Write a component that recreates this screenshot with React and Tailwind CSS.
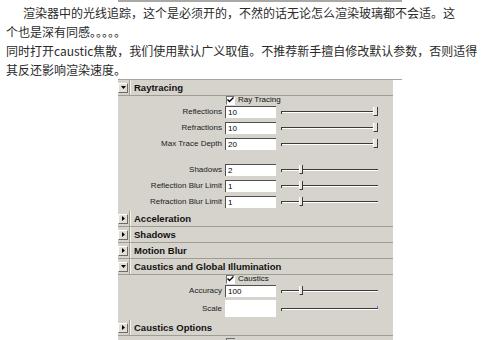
import React from "react";

const cjk = { fontFamily: '"Noto Sans CJK SC", "Liberation Sans", sans-serif' };
const ui = { fontFamily: '"Liberation Sans", Arial, sans-serif' };

function Arrow({ open }) {
  return open ? (
    <svg width="5" height="3" viewBox="0 0 5 3">
      <path d="M0 0h5L2.5 3z" fill="#000" />
    </svg>
  ) : (
    <svg width="3" height="5" viewBox="0 0 3 5">
      <path d="M0 0v5L3 2.5z" fill="#000" />
    </svg>
  );
}

function Header({ title, open }) {
  return (
    <div className="flex h-[16px] items-center border-b border-[#a09c94]">
      <div className="flex h-[10px] w-[10px] items-center justify-center border border-t-white border-l-white border-r-[#6f6c66] border-b-[#6f6c66] bg-[#e2dfd8]">
        <Arrow open={open} />
      </div>
      <div className="ml-[1px] h-full w-px bg-[#a09c94]" />
      <div className="h-full w-px bg-[#f4f2ee]" />
      <span className="ml-[3px] text-[9.5px] font-bold leading-none text-[#111]" style={ui}>
        {title}
      </span>
    </div>
  );
}

function Check({ label, h }) {
  return (
    <div className={`flex items-center pl-[108px] ${h}`}>
      <div className="flex h-[9px] w-[9px] items-center justify-center border border-t-[#707070] border-l-[#707070] border-r-white border-b-white bg-white">
        <svg width="7" height="6" viewBox="0 0 7 6">
          <path d="M0.5 2.5L2.5 4.5L6.5 0.5" stroke="#000" strokeWidth="1.4" fill="none" />
        </svg>
      </div>
      <span className="ml-[3px] text-[8px] leading-none text-[#111]" style={ui}>
        {label}
      </span>
    </div>
  );
}

function Slider({ handle }) {
  return (
    <div className="relative h-[12px] w-[97px]">
      <div className="absolute left-0 right-0 top-[5px] h-[2px] border-t border-[#3a3a3a] bg-white" />
      <div className="absolute left-0 top-[5px] h-[3px] w-px bg-[#3a3a3a]" />
      {handle === "max" && (
        <div className="absolute left-[92px] top-[1px] h-[9px] w-[5px] border-r border-b border-[#3a3a3a] border-l border-l-white bg-[#e6e3dc]" />
      )}
      {handle === "low" && (
        <div className="absolute left-[18px] top-[1px] h-[9px] w-[4px] border-r border-b border-[#3a3a3a] border-l border-l-white bg-[#e6e3dc]" />
      )}
      {handle === "none" && <div className="absolute right-0 top-[3px] h-[2px] w-px bg-[#6a6aff]" />}
    </div>
  );
}

function Field({ label, value, handle, plain }) {
  return (
    <div className={`flex items-center ${plain ? "h-[19px]" : "h-[16px]"}`}>
      <span className="w-[104px] text-right text-[8px] leading-none text-[#222]" style={ui}>
        {label}
      </span>
      <div
        className={`ml-[3px] flex w-[51px] items-center bg-white pl-[2px] text-[8px] leading-none text-black ${
          plain ? "h-[17px]" : "h-[12px] border-t border-l border-[#505050]"
        }`}
        style={ui}
      >
        {value}
      </div>
      <div className="ml-[5px]">
        <Slider handle={handle} />
      </div>
    </div>
  );
}

export default function App() {
  return (
    <div className="h-[340px] w-[482px] overflow-hidden bg-white">
      <div className="ml-[118px] h-[2px] w-[284px] bg-[#aaa8a4]" />
      <div className="whitespace-nowrap pl-[6px] pt-[1px] text-[12px] leading-[19px] text-[#2a2a2a]" style={cjk}>
        <p className="indent-[17px]">
          渲染器中的光线追踪，这个是必须开的，不然的话无论怎么渲染玻璃都不会适。这
          <br />
          个也是深有同感。。。。。
        </p>
        <p>
          同时打开caustic焦散，我们使用默认广义取值。不推荐新手擅自修改默认参数，否则适得
          <br />
          其反还影响渲染速度。
        </p>
      </div>
      <div className="ml-[118px] w-[284px] border-t border-[#a8a59f]">
        <div className="h-[262px] w-[275px] bg-[#d6d3cc]">
          <Header title="Raytracing" open />
          <Check label="Ray Tracing" h="h-[8px]" />
          <Field label="Reflections" value="10" handle="max" />
          <Field label="Refractions" value="10" handle="max" />
          <Field label="Max Trace Depth" value="20" handle="max" />
          <div className="h-[10px]" />
          <Field label="Shadows" value="2" handle="low" />
          <Field label="Reflection Blur Limit" value="1" handle="low" />
          <Field label="Refraction Blur Limit" value="1" handle="low" />
          <div className="h-px" />
          <Header title="Acceleration" />
          <Header title="Shadows" />
          <Header title="Motion Blur" />
          <Header title="Caustics and Global Illumination" open />
          <Check label="Caustics" h="h-[8px]" />
          <Field label="Accuracy" value="100" handle="low" />
          <Field label="Scale" value="" handle="none" plain />
          <div className="h-[2px]" />
          <Header title="Caustics Options" />
          <div className="ml-[108px] mt-[2px] h-[4px] w-[9px] border-t border-l border-[#707070]" />
        </div>
      </div>
    </div>
  );
}
